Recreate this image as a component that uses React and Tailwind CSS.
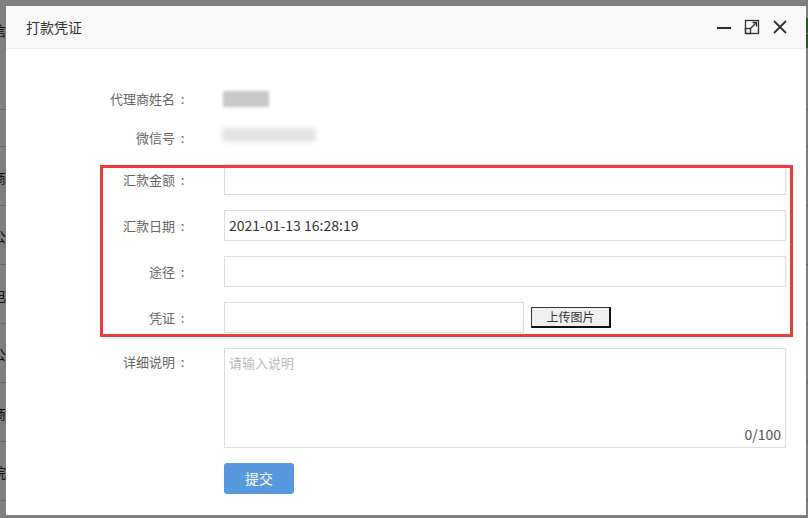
import React from "react";

const font = { fontFamily: '"Noto Sans CJK SC", "Noto Sans", sans-serif' };

function Label({ text, className = "" }) {
  return (
    <div className={`w-[184px] flex justify-end text-[13px] text-[#666] leading-none ${className}`}>
      <span>{text}</span>
      <span className="inline-block w-[15px] text-center">:</span>
    </div>
  );
}

function Row({ label, children, className = "" }) {
  return (
    <div className={`flex items-center h-[31px] ${className}`}>
      <Label text={label} />
      <div className="ml-[34px] flex items-center h-full">{children}</div>
    </div>
  );
}

export default function App() {
  const bgRows = ["商", "公", "电", "公", "商", "院"];
  return (
    <div className="relative w-[808px] h-[518px] overflow-hidden bg-white" style={font}>
      {/* underlying page */}
      <div className="absolute inset-0 flex flex-col">
        <div className="h-[110px] border-b border-[#d0d0d0] relative">
          <span className="absolute left-[-8px] top-[20px] text-[14px] text-[#222]">信</span>
        </div>
        <div className="h-[37px] border-b border-[#d0d0d0]" />
        {bgRows.map((c, i) => (
          <div key={i} className="h-[59px] border-b border-[#d0d0d0] relative">
            <span className="absolute left-[-8px] top-[20px] text-[14px] text-[#222]">{c}</span>
          </div>
        ))}
        <div className="absolute right-0 top-[18px] w-[6px] h-[15px] bg-[#4fae4f]" />
        <div className="absolute right-0 top-[34px] w-[6px] h-[14px] bg-[#4fae4f]" />
      </div>
      <div className="absolute inset-0 bg-black/50" />

      {/* modal */}
      <div className="absolute left-[6px] top-[6px] w-[800px] h-[509px] bg-white flex flex-col">
        <div className="h-[43px] bg-[#f8f8f8] border-b border-[#eeeeee] flex items-center pl-[20px] pr-[18px] shrink-0">
          <span className="text-[14px] text-[#333]">打款凭证</span>
          <div className="ml-auto flex items-center gap-[12px]">
            <svg width="16" height="16" viewBox="0 0 16 16">
              <path d="M1 9 H15" stroke="#2f2f3a" strokeWidth="2" />
            </svg>
            <svg width="16" height="16" viewBox="0 0 16 16" fill="none" stroke="#2f2f3a" strokeWidth="1.3">
              <rect x="1.5" y="1.5" width="13" height="13" />
              <rect x="1.5" y="9.5" width="5" height="5" />
              <path d="M6.5 9.5 L12.5 3.5 M8.5 3.5 H12.5 V7.5" />
            </svg>
            <svg width="16" height="16" viewBox="0 0 16 16" fill="none" stroke="#2f2f3a" strokeWidth="1.8">
              <path d="M2 2 L14 14 M14 2 L2 14" />
            </svg>
          </div>
        </div>

        <div className="relative flex-1 pt-[34px]">
          <Row label="代理商姓名" className="mb-[8px]">
            <div className="w-[46px] h-[16px] bg-[#c9c9c9] blur-[1.5px] ml-[-1px]" />
          </Row>
          <Row label="微信号" className="mb-[11px]">
            <div className="w-[94px] h-[14px] bg-[#e4e4e4] blur-[2px] ml-[-2px] mt-[-6px]" />
          </Row>
          <Row label="汇款金额" className="mb-[15px]">
            <div className="w-[562px] h-[31px] border border-[#dddddd]" />
          </Row>
          <Row label="汇款日期" className="mb-[15px]">
            <div className="w-[562px] h-[31px] border border-[#dddddd] flex items-center pl-[4px] text-[14px] text-[#333]">
              2021-01-13 16:28:19
            </div>
          </Row>
          <Row label="途径" className="mb-[15px]">
            <div className="w-[562px] h-[31px] border border-[#dddddd]" />
          </Row>
          <Row label="凭证" className="mb-[15px]">
            <div className="w-[300px] h-[31px] border border-[#dddddd]" />
            <button className="ml-[7px] w-[80px] h-[21px] bg-[#f0f0f0] border border-[#333] border-b-2 border-r-2 border-b-[#111] border-r-[#111] text-[12px] text-[#333] leading-none flex items-center justify-center">
              上传图片
            </button>
          </Row>
          <div className="flex mb-[15px]">
            <Label text="详细说明" className="pt-[7px]" />
            <div className="ml-[34px] w-[562px] h-[100px] border border-[#dddddd] relative">
              <div className="pl-[4px] pt-[6px] text-[13px] text-[#bbbbbb] leading-[16px]">请输入说明</div>
              <div className="absolute right-[4px] bottom-[6px] text-[14px] text-[#555] leading-none">0/100</div>
            </div>
          </div>
          <div className="ml-[218px]">
            <button className="w-[70px] h-[31px] bg-[#5899de] rounded-[3px] text-white text-[14px] flex items-center justify-center">
              提交
            </button>
          </div>

          {/* red annotation box */}
          <div className="absolute left-[94px] top-[116px] w-[693px] h-[172px] border-[3px] border-[#f03a3a] pointer-events-none" />
        </div>
      </div>
    </div>
  );
}
